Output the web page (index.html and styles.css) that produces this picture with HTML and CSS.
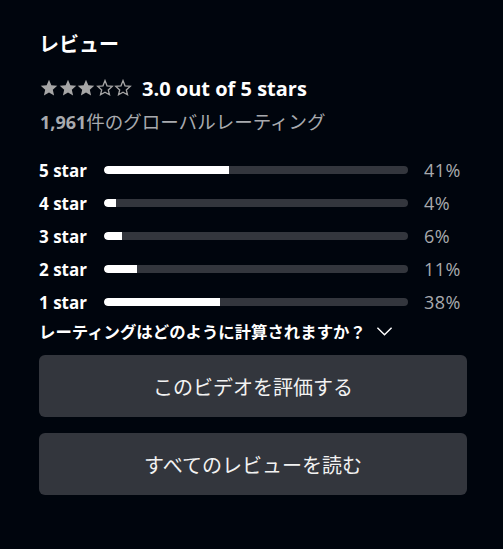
FILE: index.html
```html
<!DOCTYPE html>
<html lang="ja">
<head>
<meta charset="utf-8">
<link rel="stylesheet" href="styles.css">
</head>
<body>
<section class="reviews">
  <h2 class="title">レビュー</h2>
  <div class="summary">
    <div class="stars">
      <svg viewBox="0 0 18 18" class="star full"><path d="M9 0.8L11.35 6.26L17.27 6.81L12.8 10.74L14.11 16.54L9 13.5L3.89 16.54L5.2 10.74L0.73 6.81L6.65 6.26Z"/></svg>
      <svg viewBox="0 0 18 18" class="star full"><path d="M9 0.8L11.35 6.26L17.27 6.81L12.8 10.74L14.11 16.54L9 13.5L3.89 16.54L5.2 10.74L0.73 6.81L6.65 6.26Z"/></svg>
      <svg viewBox="0 0 18 18" class="star full"><path d="M9 0.8L11.35 6.26L17.27 6.81L12.8 10.74L14.11 16.54L9 13.5L3.89 16.54L5.2 10.74L0.73 6.81L6.65 6.26Z"/></svg>
      <svg viewBox="0 0 18 18" class="star empty"><path d="M9 1.6L11 6.8L16.3 7.3L12.3 10.9L13.5 15.8L9 13.2L4.5 15.8L5.7 10.9L1.7 7.3L7 6.8Z"/></svg>
      <svg viewBox="0 0 18 18" class="star empty"><path d="M9 1.6L11 6.8L16.3 7.3L12.3 10.9L13.5 15.8L9 13.2L4.5 15.8L5.7 10.9L1.7 7.3L7 6.8Z"/></svg>
    </div>
    <span class="score">3.0 out of 5 stars</span>
  </div>
  <p class="count"><b>1,961</b>件のグローバルレーティング</p>

  <div class="dist">
    <div class="row"><span class="label">5 star</span><div class="track"><div class="fill" style="width:41%"></div></div><span class="pct">41%</span></div>
    <div class="row"><span class="label">4 star</span><div class="track"><div class="fill" style="width:4%"></div></div><span class="pct">4%</span></div>
    <div class="row"><span class="label">3 star</span><div class="track"><div class="fill" style="width:6%"></div></div><span class="pct">6%</span></div>
    <div class="row"><span class="label">2 star</span><div class="track"><div class="fill" style="width:11%"></div></div><span class="pct">11%</span></div>
    <div class="row"><span class="label">1 star</span><div class="track"><div class="fill" style="width:38%"></div></div><span class="pct">38%</span></div>
  </div>

  <div class="how">
    <span>レーティングはどのように計算されますか？</span>
    <svg viewBox="0 0 18 10" class="chev"><path d="M1.5 1.5L9 9l7.5-7.5"/></svg>
  </div>

  <div class="buttons">
    <button class="btn">このビデオを評価する</button>
    <button class="btn">すべてのレビューを読む</button>
  </div>
</section>
</body>
</html>
```

FILE: styles.css
```css
html, body {
  margin: 0;
  padding: 0;
  background: #00050d;
}
body {
  font-family: "Open Sans", "Noto Sans CJK JP", sans-serif;
  color: #ffffff;
}
.reviews {
  width: 428px;
  padding: 28px 0 0 39px;
}
.title {
  margin: 0;
  font-family: "Noto Sans CJK JP", sans-serif;
  font-size: 20px;
  font-weight: 700;
  line-height: 32px;
}
.summary {
  display: flex;
  align-items: center;
  margin-top: 14px;
  height: 28px;
}
.stars {
  display: flex;
  gap: 0.5px;
  margin-left: 1px;
}
.star {
  width: 18px;
  height: 18px;
}
.star.full path {
  fill: #a6a6a6;
}
.star.empty path {
  fill: none;
  stroke: #a6a6a6;
  stroke-width: 1.3;
}
.score {
  margin-left: 10px;
  font-size: 20px;
  font-weight: 700;
}
.count {
  margin: 6px 0 0 1px;
  font-family: "Noto Sans CJK JP", sans-serif;
  font-size: 18.5px;
  line-height: 26px;
  color: #a8aaae;
}
.count b {
  font-family: "Open Sans", sans-serif;
  font-size: 18px;
  font-weight: 700;
}
.dist {
  margin-top: 23px;
  display: flex;
  flex-direction: column;
  gap: 9px;
}
.row {
  display: flex;
  align-items: center;
  height: 24px;
}
.label {
  width: 65px;
  font-size: 17px;
  font-weight: 700;
  flex: none;
}
.track {
  width: 304px;
  height: 8px;
  border-radius: 4px;
  background: #33363d;
  overflow: hidden;
  flex: none;
}
.fill {
  height: 100%;
  background: #ffffff;
  border-radius: 4px 0 0 4px;
}
.pct {
  margin-left: 16px;
  font-size: 18px;
  letter-spacing: 0.5px;
  color: #a8aaae;
}
.how {
  display: flex;
  align-items: center;
  margin-top: 6px;
  height: 22px;
  font-family: "Noto Sans CJK JP", sans-serif;
  font-size: 16.4px;
  font-weight: 700;
}
.chev {
  width: 17px;
  height: 10px;
  margin-left: 10px;
}
.chev path {
  fill: none;
  stroke: #ffffff;
  stroke-width: 1.5;
}
.buttons {
  margin-top: 13px;
  display: flex;
  flex-direction: column;
  gap: 16px;
}
.btn {
  height: 62px;
  width: 428px;
  border: none;
  border-radius: 6px;
  background: #33363d;
  color: #f2f2f2;
  font-family: "Noto Sans CJK JP", sans-serif;
  font-size: 20px;
  font-weight: 400;
}
```
